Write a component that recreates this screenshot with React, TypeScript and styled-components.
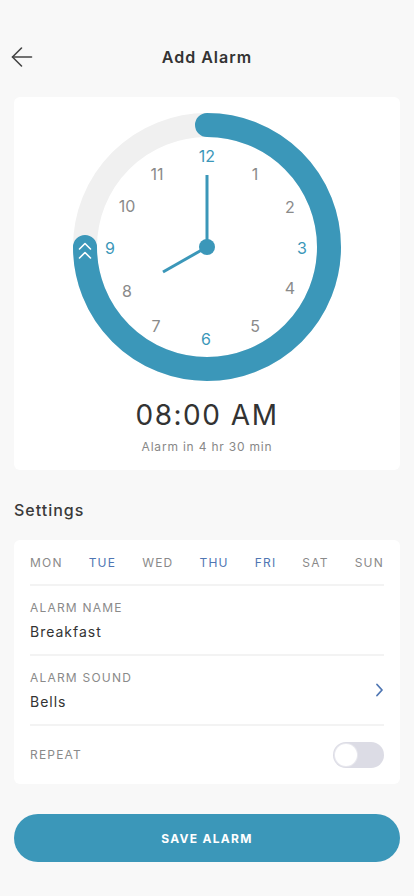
import styled, { createGlobalStyle } from 'styled-components'

const GlobalStyle = createGlobalStyle`
  html, body {
    margin: 0;
    padding: 0;
    background-color: #f8f8f8;
    font-family: Inter, "Noto Sans", "Liberation Sans", sans-serif;
  }
`

const Page = styled.div`
  width: 414px;
  min-height: 896px;
  box-sizing: border-box;
  padding: 40px 14px 0;
  display: flex;
  flex-direction: column;
`

const Header = styled.div`
  position: relative;
  height: 34px;
  display: flex;
  align-items: center;
  justify-content: center;
`

const BackButton = styled.button`
  position: absolute;
  left: -4px;
  top: 5px;
  width: 24px;
  height: 24px;
  padding: 0;
  border: none;
  background: none;
  display: flex;
  align-items: center;
  justify-content: center;
`

const Title = styled.h1`
  margin: 0;
  font-size: 16px;
  font-weight: 600;
  letter-spacing: 1px;
  color: #333;
`

const Card = styled.div`
  background-color: white;
  border-radius: 6px;
`

const ClockCard = styled(Card)`
  margin-top: 23px;
  padding: 14px 0 15px;
  display: flex;
  flex-direction: column;
  align-items: center;
`

const TimeText = styled.div`
  margin-top: 15px;
  font-size: 28px;
  line-height: 34px;
  letter-spacing: 1.5px;
  color: #333;
`

const SubText = styled.div`
  margin-top: 7px;
  font-size: 12px;
  line-height: 16px;
  letter-spacing: 0.8px;
  color: #888;
`

const SectionTitle = styled.h2`
  margin: 30px 0 20px;
  font-size: 16px;
  line-height: 20px;
  font-weight: 500;
  letter-spacing: 1px;
  color: #3a3a3a;
`

const SettingsCard = styled(Card)`
  padding: 0 16px;
`

const DaysRow = styled.div`
  height: 46px;
  display: flex;
  align-items: center;
  justify-content: space-between;
  border-bottom: 2px solid #f3f3f3;
  box-sizing: border-box;
`

const Day = styled.span<{ $active?: boolean }>`
  font-size: 12px;
  letter-spacing: 1.2px;
  color: ${p => (p.$active ? '#4f76b3' : '#8a8a8a')};
`

const SettingRow = styled.div<{ $last?: boolean }>`
  display: flex;
  align-items: center;
  justify-content: space-between;
  box-sizing: border-box;
  height: ${p => (p.$last ? '58px' : '70px')};
  border-bottom: ${p => (p.$last ? 'none' : '2px solid #f3f3f3')};
`

const FieldBlock = styled.div`
  display: flex;
  flex-direction: column;
  gap: 7px;
`

const Label = styled.div`
  font-size: 12px;
  line-height: 16px;
  letter-spacing: 1.2px;
  color: #8a8a8a;
`

const Value = styled.div`
  font-size: 14px;
  line-height: 18px;
  letter-spacing: 1px;
  color: #333;
`

const Toggle = styled.div`
  width: 51px;
  height: 26px;
  border-radius: 13px;
  background-color: #dcdce5;
  box-sizing: border-box;
  padding: 2px;
  display: flex;
  align-items: center;
`

const Knob = styled.div`
  width: 22px;
  height: 22px;
  border-radius: 50%;
  background-color: white;
  box-shadow: 0 0 0 1px #e8e8ee;
`

const SaveButton = styled.button`
  margin-top: 30px;
  height: 48px;
  border: none;
  border-radius: 24px;
  background-color: #3b97b9;
  color: white;
  font-family: inherit;
  font-size: 12px;
  font-weight: 700;
  letter-spacing: 1.3px;
`

const BLUE = '#3b97b9'

const numbers: [string, number, number][] = [
  ['12', 136, 45],
  ['1', 184, 63],
  ['2', 219, 96],
  ['3', 231, 137],
  ['4', 219, 177],
  ['5', 184, 215],
  ['6', 135, 228],
  ['7', 85, 215],
  ['8', 56, 180],
  ['9', 39, 137],
  ['10', 56, 95],
  ['11', 86, 63],
]

const Clock = () => (
  <svg width="272" height="272" viewBox="0 0 272 272">
    <circle cx="136" cy="136" r="122" fill="none" stroke="#f0f0f0" strokeWidth="24" />
    <path
      d="M 136 14 A 122 122 0 1 1 14 136"
      fill="none"
      stroke={BLUE}
      strokeWidth="24"
      strokeLinecap="round"
    />
    <g fill="none" stroke="white" strokeWidth="1.6" strokeLinecap="round" strokeLinejoin="round">
      <polyline points="8.5,138 14,132.5 19.5,138" />
      <polyline points="8.5,147 14,141.5 19.5,147" />
    </g>
    {numbers.map(([n, x, y]) => (
      <text
        key={n}
        x={x}
        y={y}
        textAnchor="middle"
        dominantBaseline="central"
        fontSize="16"
        fontFamily="Inter, 'Noto Sans', sans-serif"
        fill={['12', '3', '6', '9'].includes(n) ? BLUE : '#8a8a8a'}
      >
        {n}
      </text>
    ))}
    <line x1="136" y1="136" x2="136" y2="64" stroke={BLUE} strokeWidth="3" />
    <line x1="136" y1="136" x2="92" y2="161" stroke={BLUE} strokeWidth="3" />
    <circle cx="136" cy="136" r="8" fill={BLUE} />
  </svg>
)

const days = [
  { name: 'MON', active: false },
  { name: 'TUE', active: true },
  { name: 'WED', active: false },
  { name: 'THU', active: true },
  { name: 'FRI', active: true },
  { name: 'SAT', active: false },
  { name: 'SUN', active: false },
]

const App = () => {
  return (
    <Page>
      <GlobalStyle />
      <Header>
        <BackButton>
          <svg width="22" height="22" viewBox="0 0 22 22" fill="none" stroke="#444" strokeWidth="1.6" strokeLinecap="round" strokeLinejoin="round">
            <line x1="1.5" y1="11" x2="20.5" y2="11" />
            <polyline points="10.5,2 1.5,11 10.5,20" />
          </svg>
        </BackButton>
        <Title>Add Alarm</Title>
      </Header>

      <ClockCard>
        <Clock />
        <TimeText>08:00 AM</TimeText>
        <SubText>Alarm in 4 hr 30 min</SubText>
      </ClockCard>

      <SectionTitle>Settings</SectionTitle>

      <SettingsCard>
        <DaysRow>
          {days.map(d => (
            <Day key={d.name} $active={d.active}>{d.name}</Day>
          ))}
        </DaysRow>
        <SettingRow>
          <FieldBlock>
            <Label>ALARM NAME</Label>
            <Value>Breakfast</Value>
          </FieldBlock>
        </SettingRow>
        <SettingRow>
          <FieldBlock>
            <Label>ALARM SOUND</Label>
            <Value>Bells</Value>
          </FieldBlock>
          <svg width="10" height="14" viewBox="0 0 10 14" fill="none" stroke="#4f76b3" strokeWidth="1.8" strokeLinecap="round" strokeLinejoin="round">
            <polyline points="3,1.5 8,7 3,12.5" />
          </svg>
        </SettingRow>
        <SettingRow $last>
          <Label>REPEAT</Label>
          <Toggle>
            <Knob />
          </Toggle>
        </SettingRow>
      </SettingsCard>

      <SaveButton>SAVE ALARM</SaveButton>
    </Page>
  )
}

export default App
